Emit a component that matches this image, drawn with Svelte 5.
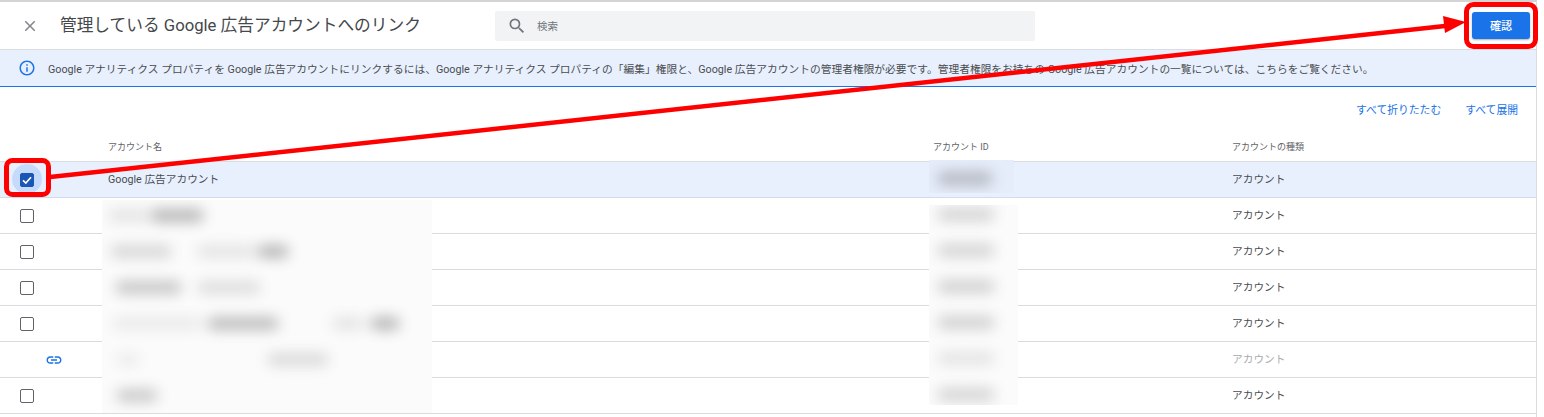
<script>
  const rows = [
    { check: 'on', type: 'アカウント', name: 'Google 広告アカウント' },
    { check: 'off', type: 'アカウント' },
    { check: 'off', type: 'アカウント' },
    { check: 'off', type: 'アカウント' },
    { check: 'off', type: 'アカウント' },
    { check: 'link', type: 'アカウント' },
    { check: 'off', type: 'アカウント' }
  ];
  // left, top, width, opacity of each smudge over the redacted names
  const blobsLeft = [
    [6, 9, 40, 0.14], [48, 9, 54, 0.42],
    [8, 45, 62, 0.22], [95, 45, 58, 0.14], [155, 45, 32, 0.42],
    [13, 81, 67, 0.32], [95, 81, 64, 0.18],
    [10, 117, 90, 0.1], [105, 117, 72, 0.38], [230, 117, 32, 0.14], [268, 117, 30, 0.42],
    [14, 153, 24, 0.09], [165, 153, 62, 0.2],
    [14, 189, 42, 0.3]
  ];
  const blobsRight = [
    [3, 0.24], [39, 0.24], [75, 0.26], [111, 0.26], [147, 0.14], [183, 0.24]
  ];
</script>

<div class="page">
  <div class="panel">
    <header class="top">
      <button class="close" aria-label="閉じる">
        <svg viewBox="0 0 24 24" width="18" height="18"><path d="M19 6.41 17.59 5 12 10.59 6.41 5 5 6.41 10.59 12 5 17.59 6.41 19 12 13.41 17.59 19 19 17.59 13.41 12z"/></svg>
      </button>
      <h1>管理している Google 広告アカウントへのリンク</h1>
      <div class="search">
        <svg viewBox="0 0 24 24" width="20" height="20"><path d="M15.5 14h-.79l-.28-.27A6.47 6.47 0 0 0 16 9.5 6.5 6.5 0 1 0 9.5 16c1.61 0 3.09-.59 4.23-1.57l.27.28v.79l5 4.99L20.49 19l-4.99-5zm-6 0C7.01 14 5 11.99 5 9.5S7.01 5 9.5 5 14 7.01 14 9.5 11.99 14 9.5 14z"/></svg>
        <span>検索</span>
      </div>
      <button class="confirm">確認</button>
    </header>

    <div class="banner">
      <svg viewBox="0 0 24 24" width="18" height="18"><path d="M11 7h2v2h-2zm0 4h2v6h-2zm1-9C6.48 2 2 6.48 2 12s4.48 10 10 10 10-4.48 10-10S17.52 2 12 2zm0 18c-4.41 0-8-3.59-8-8s3.59-8 8-8 8 3.59 8 8-3.59 8-8 8z"/></svg>
      <p>Google アナリティクス プロパティを Google 広告アカウントにリンクするには、Google アナリティクス プロパティの「編集」権限と、Google 広告アカウントの管理者権限が必要です。管理者権限をお持ちの Google 広告アカウントの一覧については、こちらをご覧ください。</p>
    </div>

    <div class="actions">
      <span>すべて折りたたむ</span>
      <span>すべて展開</span>
    </div>

    <div class="table">
      <div class="row head">
        <div></div>
        <div>アカウント名</div>
        <div>アカウント ID</div>
        <div>アカウントの種類</div>
      </div>
      {#each rows as row}
        <div class="row" class:selected={row.check === 'on'}>
          <div class="cell-check">
            {#if row.check === 'on'}
              <span class="halo"></span>
              <span class="box on">
                <svg viewBox="0 0 14 14" width="14" height="14"><path d="M3 7.4 5.8 10 11 4.2" fill="none" stroke="#fff" stroke-width="1.7"/></svg>
              </span>
            {:else if row.check === 'off'}
              <span class="box"></span>
            {:else}
              <svg class="link" viewBox="0 0 24 24" width="18" height="18"><path d="M3.9 12c0-1.71 1.39-3.1 3.1-3.1h4V7H7c-2.76 0-5 2.24-5 5s2.24 5 5 5h4v-1.9H7c-1.71 0-3.1-1.39-3.1-3.1zM8 13h8v-2H8v2zm9-6h-4v1.9h4c1.71 0 3.1 1.39 3.1 3.1s-1.39 3.1-3.1 3.1h-4V17h4c2.76 0 5-2.24 5-5s-2.24-5-5-5z"/></svg>
            {/if}
          </div>
          <div>{row.name ?? ''}</div>
          <div></div>
          <div class:muted={row.check === 'link'}>{row.type}</div>
        </div>
      {/each}
    </div>
  </div>

  <div class="mask mask-left">
    {#each blobsLeft as b}
      <i style="left:{b[0]}px;top:{b[1]}px;width:{b[2]}px;opacity:{b[3]}"></i>
    {/each}
  </div>
  <div class="mask mask-right">
    {#each blobsRight as b}
      <i style="left:8px;top:{b[0]}px;width:58px;opacity:{b[1]}"></i>
    {/each}
  </div>
  <div class="mask mask-top">
    <i style="left:8px;top:12px;width:56px;opacity:0.36"></i>
  </div>

  <svg class="notes" viewBox="0 0 1544 417" width="1544" height="417">
    <rect x="1466.5" y="4.5" width="69" height="42" rx="7" fill="none" stroke="#f00" stroke-width="5"/>
    <rect x="6.5" y="160.5" width="42" height="34" rx="6" fill="none" stroke="#f00" stroke-width="5"/>
    <line x1="50" y1="177" x2="1445" y2="26" stroke="#f00" stroke-width="4.5"/>
    <polygon points="1466,22 1443,16 1445,33" fill="#f00"/>
  </svg>
</div>

<style>
  :global(body) { margin: 0; background: #fff; }
  .page {
    position: relative;
    width: 1544px;
    height: 417px;
    overflow: hidden;
    background: #fff;
    font-family: Roboto, "Noto Sans CJK JP", sans-serif;
    color: #3c4043;
  }
  .panel {
    width: 1537px;
    height: 417px;
    box-sizing: border-box;
    border-top: 2px solid #d4d4d4;
    border-right: 1px solid #dadce0;
  }
  .top {
    height: 47px;
    display: flex;
    align-items: center;
    border-bottom: 1px solid #dadce0;
    padding-left: 21px;
  }
  .close {
    width: 18px; height: 18px; padding: 0; border: 0; background: none;
    fill: #80868b; margin-right: 21px; flex: none;
  }
  .close svg { display: block; }
  h1 {
    margin: 0 0 4px;
    width: 435px;
    flex: none;
    font-size: 16.7px;
    font-weight: 400;
    color: #45484b;
    white-space: nowrap;
  }
  .search {
    width: 540px;
    height: 30px;
    background: #f1f3f4;
    border-radius: 2px;
    display: flex;
    align-items: center;
    gap: 10px;
    padding-left: 12px;
    box-sizing: border-box;
    font-size: 10.5px;
    color: #70757a;
    fill: #70757a;
  }
  .confirm {
    margin-left: auto;
    margin-right: 6px;
    width: 58px;
    height: 27px;
    border: 0;
    border-radius: 3px;
    background: #1a73e8;
    color: #fff;
    font: 500 11px Roboto, "Noto Sans CJK JP", sans-serif;
    box-shadow: 0 1px 2px rgba(60,64,67,.4);
    padding: 0 0 2px;
  }
  .banner {
    height: 36px;
    background: #e8f0fe;
    border-bottom: 1px solid #1a73e8;
    display: flex;
    align-items: center;
    padding-left: 18px;
    fill: #1a73e8;
  }
  .banner svg { flex: none; }
  .banner p {
    margin: 0 0 0 12px;
    font-size: 10.74px;
    color: #4a4d50;
    white-space: nowrap;
  }
  .actions {
    height: 44px;
    display: flex;
    justify-content: flex-end;
    align-items: center;
    gap: 24px;
    padding-right: 18px;
    font-size: 10.8px;
    color: #1a73e8;
  }
  .row {
    display: grid;
    grid-template-columns: 108px 825px 299px 1fr;
    height: 36px;
    align-items: center;
    border-bottom: 1px solid #dadce0;
    box-sizing: border-box;
    font-size: 10.7px;
    color: #4a4d50;
  }
  .row > div:not(.cell-check) { padding-bottom: 2px; }
  .row.head {
    height: 31px;
    font-size: 9px;
    color: #5f6368;
  }
  .row.head > div { padding-bottom: 0; }
  .row.selected { background: #e8f0fe; border-bottom-color: #d2dcee; }
  .cell-check {
    position: relative;
    height: 100%;
    padding-left: 20px;
    display: flex;
    align-items: center;
  }
  .box {
    position: relative;
    width: 12px;
    height: 12px;
    border: 1px solid #5f6368;
    border-radius: 2px;
    display: block;
    flex: none;
    background: #fff;
  }
  .box.on {
    background: #1a56b4;
    border-color: #1a56b4;
  }
  .box.on svg { position: absolute; left: -1px; top: -1px; }
  .halo {
    position: absolute;
    left: 12px; top: 2px;
    width: 30px; height: 30px;
    border-radius: 50%;
    background: #c6dafc;
  }
  .link { fill: #1a73e8; margin-left: 25px; }
  .muted { color: #a8abaf; }
  .mask {
    position: absolute;
    overflow: hidden;
    background: #fbfbfb;
  }
  .mask i {
    position: absolute;
    height: 13px;
    background: #555;
    border-radius: 7px;
    filter: blur(7px);
  }
  .mask-left { left: 102px; top: 200px; width: 330px; height: 213px; }
  .mask-right { left: 929px; top: 205px; width: 89px; height: 200px; }
  .mask-top { left: 929px; top: 160px; width: 85px; height: 33px; background: #e6edfa; }
  .notes { position: absolute; left: 0; top: 0; pointer-events: none; }
</style>
